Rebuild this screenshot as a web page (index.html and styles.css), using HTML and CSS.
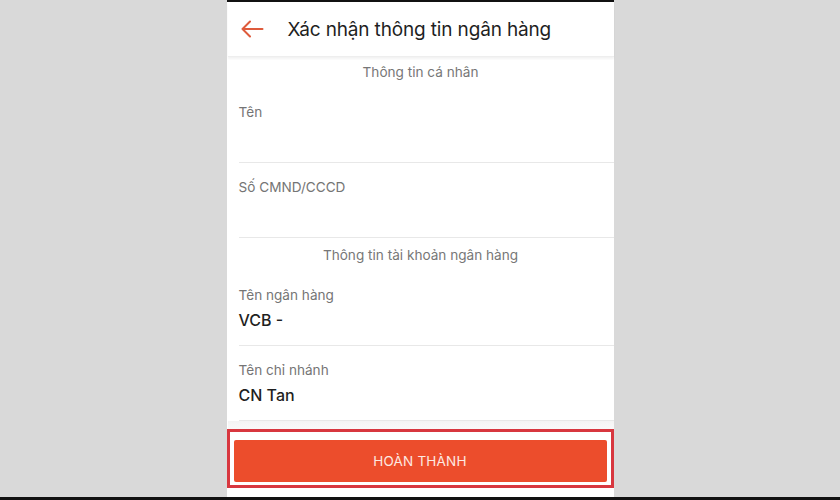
FILE: index.html
```html
<!DOCTYPE html>
<html lang="vi">
<head>
<meta charset="utf-8">
<title>Xác nhận thông tin ngân hàng</title>
<link rel="stylesheet" href="styles.css">
</head>
<body>
<div class="stage">
  <div class="phone">
    <header class="appbar">
      <svg class="back" width="24" height="18" viewBox="0 0 24 18" aria-hidden="true">
        <path d="M22.5 9H2.5M10 1.5L2.5 9L10 16.5" fill="none" stroke="#de5b3c" stroke-width="2" stroke-linecap="round" stroke-linejoin="round"/>
      </svg>
      <h1 class="title">Xác nhận thông tin ngân hàng</h1>
    </header>
    <main class="content">
      <div class="section-title sec-first">Thông tin cá nhân</div>
      <div class="field">
        <div class="label">Tên</div>
      </div>
      <div class="field">
        <div class="label">Số CMND/CCCD</div>
      </div>
      <div class="section-title sec-second">Thông tin tài khoản ngân hàng</div>
      <div class="field">
        <div class="label">Tên ngân hàng</div>
        <div class="value">VCB -</div>
      </div>
      <div class="field">
        <div class="label">Tên chỉ nhánh</div>
        <div class="value">CN Tan</div>
      </div>
    </main>
    <footer class="footer">
      <div class="highlight">
        <button class="submit" type="button">HOÀN THÀNH</button>
      </div>
    </footer>
  </div>
  <div class="bottom-bar"></div>
</div>
</body>
</html>
```

FILE: styles.css
```css
* { box-sizing: border-box; }
html, body {
  margin: 0;
  padding: 0;
  background: #d9d9d9;
}
body {
  font-family: Inter, "Noto Sans", "Liberation Sans", sans-serif;
}
.stage {
  width: 840px;
  height: 500px;
  display: flex;
  flex-direction: column;
  align-items: center;
  overflow: hidden;
}
.phone {
  width: 387px;
  height: 497px;
  background: #fff;
  border-top: 2px solid #111;
  display: flex;
  flex-direction: column;
  padding-left: 1px;
}
.bottom-bar {
  width: 840px;
  height: 3px;
  background: #111;
}
.appbar {
  height: 55px;
  display: flex;
  align-items: center;
  padding-left: 12px;
  flex-shrink: 0;
  box-shadow: 0 2px 2px rgba(0,0,0,0.05);
  border-bottom: 1px solid #eeeeee;
  position: relative;
  z-index: 1;
}
.back {
  display: block;
}
.title {
  margin: 0 0 0 24px;
  font-size: 19px;
  font-weight: 400;
  color: #1f1f1f;
  letter-spacing: -0.15px;
}
.content {
  display: flex;
  flex-direction: column;
}
.section-title {
  text-align: center;
  color: #777;
  font-size: 13.6px;
  display: flex;
  align-items: center;
  justify-content: center;
}
.sec-first { height: 31px; padding-bottom: 2px; }
.sec-second { height: 33px; }
.field {
  margin-left: 11px;
  height: 75px;
  border-bottom: 1px solid #e8e8e8;
  padding-top: 14px;
}
.label {
  font-size: 13.6px;
  line-height: 20px;
  color: #757575;
}
.value {
  margin-top: 5px;
  font-size: 16px;
  line-height: 20px;
  font-weight: 500;
  color: #1f1f1f;
}
.footer {
  flex: 1;
  padding-top: 8px;
  background: linear-gradient(#f4f4f4, #f9f9f9 8px, #fff 8px);
}
.highlight {
  margin-left: -1px;
  width: 387px;
  border: 3px solid #d8373f;
  padding: 8px 4px 3px 4px;
  background: #fff;
}
.submit {
  display: block;
  width: 100%;
  height: 42px;
  border: none;
  border-radius: 2px;
  background: #ec4d2c;
  color: #fde9e2;
  font-family: inherit;
  font-size: 13.5px;
  letter-spacing: 0.2px;
}
```
